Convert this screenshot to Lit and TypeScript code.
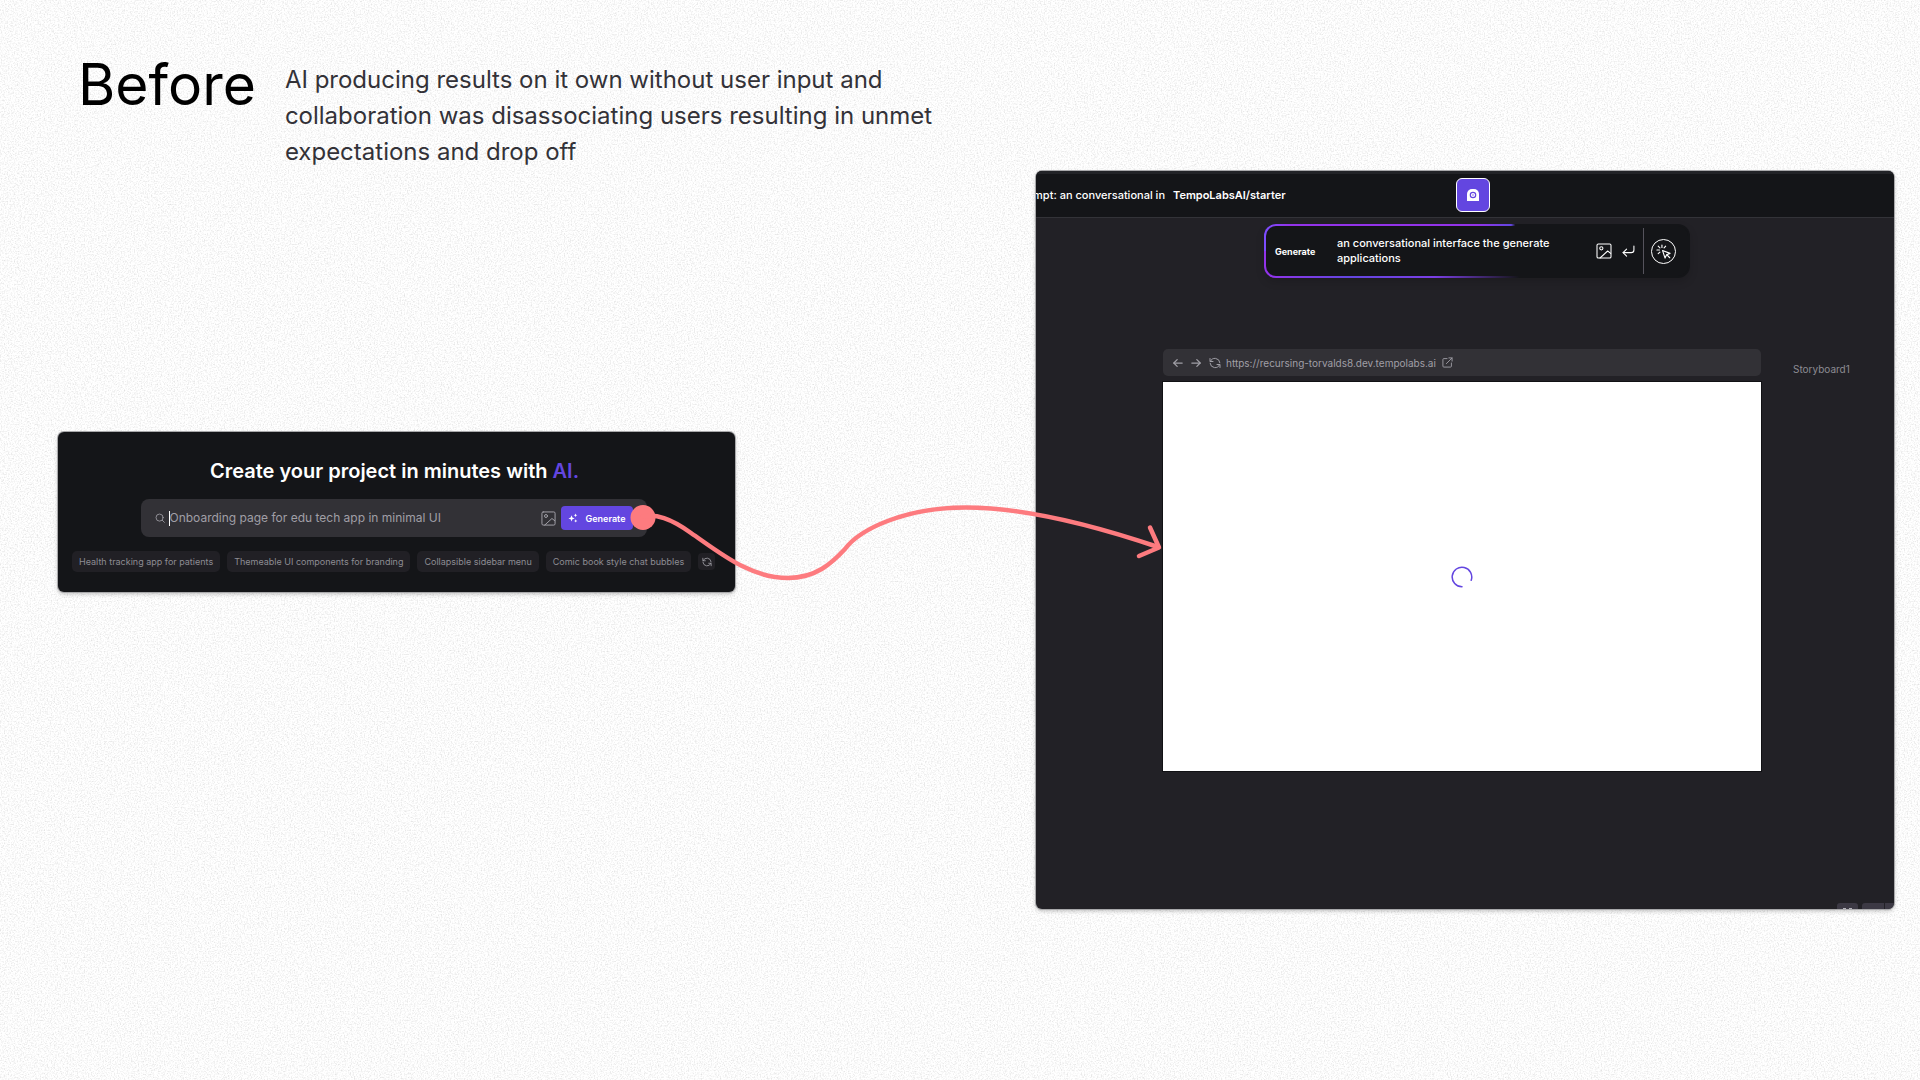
import { LitElement, html, css, svg } from "lit";
import { customElement } from "lit/decorators.js";

const base = css`
  *, *::before, *::after { box-sizing: border-box; }
  svg { display: block; flex: none; fill: none; stroke: currentColor; stroke-linecap: round; stroke-linejoin: round; }
  button, input, textarea { font: inherit; color: inherit; background: none; border: 0; padding: 0; margin: 0; outline: 0; }
  h1, h2, p, ul { margin: 0; padding: 0; }
  a { color: inherit; text-decoration: none; }
`;

const icon = (size: number, body: unknown, width = 2) =>
  html`<svg width=${size} height=${size} viewBox="0 0 24 24" stroke-width=${width} aria-hidden="true">${body}</svg>`;

const searchIcon = svg`<circle cx="11" cy="11" r="8.5"/><path d="M17.5 17.5 22.5 22.5"/>`;
const imageIcon = svg`<rect x="1.5" y="1.5" width="21" height="21" rx="2"/><circle cx="8" cy="8" r="2.4"/><path d="M22 15.5 17.5 12 6 22.5"/>`;
const refreshIcon = svg`<path d="M2 3v6h6"/><path d="M22 21v-6h-6"/><path d="M2.6 9A10 10 0 0 1 21.8 11.5"/><path d="M21.4 15A10 10 0 0 1 2.2 12.5"/>`;
const sparkleIcon = svg`<g fill="currentColor" stroke="none"><path d="M8.5 5.5 10.6 11 16 13l-5.4 2L8.5 20.5 6.4 15 1 13l5.4-2z"/><path d="M18 1l1.3 3.2L22.5 5.5l-3.2 1.3L18 10l-1.3-3.2L13.5 5.5l3.2-1.3z"/><path d="M18.5 15l1.2 2.8 2.8 1.2-2.8 1.2-1.2 2.8-1.2-2.8-2.8-1.2 2.8-1.2z"/></g>`;
const enterIcon = svg`<path d="M22 2v7a5 5 0 0 1-5 5H2"/><path d="M8.5 7.5 2 14l6.5 6.5"/>`;
const backIcon = svg`<path d="M22 12H2"/><path d="M10 4 2 12l8 8"/>`;
const forwardIcon = svg`<path d="M2 12h20"/><path d="M14 4l8 8-8 8"/>`;
const externalIcon = svg`<path d="M11 3.5H4a2 2 0 0 0-2 2V20a2 2 0 0 0 2 2h14.5a2 2 0 0 0 2-2v-7"/><path d="M15 2h7v7"/><path d="M22 2 9.5 14.5"/>`;
const clickIcon = svg`<path d="M10.500 10.500 22.500 15l-5.500 2.200L14.500 22.500z"/><path d="M17.500 17.500 22 22"/><path d="M9.500 1.500v4"/><path d="M1.500 9.500h4"/><path d="M3.500 3.500l2.800 2.800"/><path d="M15.500 3.500l-2.600 2.800"/><path d="M3.500 15.500l2.800-2.600"/>`;

@customElement("prompt-card")
export class PromptCard extends LitElement {
  static styles = [base, css`
    :host { display: flex; flex-direction: column; align-items: center; padding: 27px 14px 20px; border-radius: 6px; background: #141518; color: #fff; box-shadow: 0 0 0 1px #a9a9ab, 0 2px 4px rgba(0, 0, 0, .25); }
    .title { padding-right: 4px; font-size: 20px; line-height: 24px; font-weight: 600; }
    .accent { color: #6346e0; }
    .search { display: flex; align-items: center; width: 506px; max-width: 100%; height: 38px; margin-top: 16px; margin-right: 6px; padding: 0 14px 0 14px; border-radius: 8px; background: #323136; color: #a09fa6; }
    .caret { width: 1px; height: 15px; margin-left: 4px; background: #fff; }
    .field { flex: 1; min-width: 0; font-size: 12px; line-height: 16px; }
    .field::placeholder { color: #a09fa6; opacity: 1; }
    .generate { display: flex; align-items: center; gap: 8px; height: 24px; margin-left: 5px; padding: 0 7px 0 7px; border-radius: 4px; background: #6346e0; color: #fff; font-size: 9px; font-weight: 600; }
    .ideas { display: flex; align-items: center; gap: 7px; margin-top: 14px; width: 100%; list-style: none; white-space: nowrap; }
    .idea { display: block; height: 21px; padding: 0 7px; border-radius: 5px; background: #212025; color: #8d8c93; font-size: 9px; line-height: 21px; }
    .refresh { display: grid; place-items: center; width: 17px; height: 17px; border-radius: 4px; background: #212025; color: #a09fa6; }
  `];

  private ideas = [
    "Health tracking app for patients",
    "Themeable UI components for branding",
    "Collapsible sidebar menu",
    "Comic book style chat bubbles",
  ];

  render() {
    return html`
      <h2 class="title">Create your project in minutes with <span class="accent">AI.</span></h2>
      <div class="search">
        ${icon(10, searchIcon)}
        <span class="caret"></span>
        <input class="field" aria-label="Project description" placeholder="Onboarding page for edu tech app in minimal UI" />
        <button aria-label="Attach image">${icon(15, imageIcon, 1.6)}</button>
        <button class="generate">${icon(10, sparkleIcon)}Generate</button>
      </div>
      <ul class="ideas">
        ${this.ideas.map((idea) => html`<li><button class="idea">${idea}</button></li>`)}
        <li><button class="refresh" aria-label="More ideas">${icon(10, refreshIcon)}</button></li>
      </ul>
    `;
  }
}

@customElement("editor-card")
export class EditorCard extends LitElement {
  static styles = [base, css`
    :host { display: flex; flex-direction: column; border-radius: 6px; overflow: hidden; background: #222126; color: #fff; box-shadow: 0 0 0 1px #a9a9ab, 0 2px 4px rgba(0, 0, 0, .25); }
    .bar { display: grid; grid-template-columns: 1fr auto 1fr; align-items: center; height: 47px; padding: 0 0 1px 16px; border-top: 3px solid #222327; border-bottom: 1px solid #333338; background: #141518; }
    .crumbs { display: flex; gap: 8px; margin-left: -16px; font-size: 11px; line-height: 16px; font-weight: 600; white-space: nowrap; }
    .crumb { display: flex; justify-content: flex-end; width: 129px; overflow: hidden; font-weight: 500; }
    .logo { display: grid; place-items: center; width: 34px; height: 34px; border: 1px solid #fff; border-radius: 6px; background: #6346e0; }
    .canvas { display: flex; flex-direction: column; align-items: center; padding-top: 6px; }
    .prompt { width: 426px; max-width: 100%; margin-left: 24px; padding: 2px; border-radius: 12px; box-shadow: 0 4px 8px rgba(0, 0, 0, .15);
      background:
        linear-gradient(90deg, #7c4dff 0%, #9333ea 6%, #9333ea 50%, #6346e0 58%, #141518 59%) top / 100% 27px no-repeat,
        linear-gradient(90deg, #9333ea 0%, #6346e0 20%, #7b3fe6 40%, #141518 60%) bottom / 100% 27px no-repeat; }
    .inner { display: flex; align-items: center; height: 50px; padding: 0 12px 0 9px; border-radius: 10px; background: #141518; }
    .label { width: 62px; font-size: 9px; font-weight: 700; }
    .text { display: block; flex: 1; min-width: 0; height: 30px; resize: none; overflow: hidden; font-size: 11px; line-height: 15px; font-weight: 500; }
    .tools { display: flex; align-items: center; gap: 10px; margin: 0 8px 0 32px; }
    .pick { display: grid; place-items: center; width: 25px; height: 25px; border: 1px solid #fff; border-radius: 50%; }
    .rule { width: 1px; height: 46px; margin-right: 7px; background: #55535c; }
    .board { display: grid; grid-template-columns: 127px 1fr 133px; width: 100%; margin-top: 71px; }
    .browser { grid-column: 2; }
    .address { display: flex; align-items: center; gap: 8px; height: 27px; padding-left: 10px; border-radius: 5px; background: #323136; color: #a09fa6; font-size: 10px; }
    .url { display: flex; align-items: center; gap: 6px; margin-left: -3px; }
    .view { display: grid; place-items: center; margin-top: 6px; aspect-ratio: 598 / 389; background: #fff; color: #6346e0; box-shadow: 0 0 0 1px #111114; }
    .name { padding: 12px 0 0 32px; color: #8d8c93; font-size: 10px; line-height: 16px; }
    .foot { display: flex; justify-content: flex-end; gap: 4px; margin-top: 132px; height: 6px; }
    .zoom { display: flex; align-items: flex-end; justify-content: center; gap: 3px; width: 21px; border-radius: 3px 3px 0 0; background: #3c3944; }
    .dash { width: 3px; height: 1px; background: #b5b3bb; }
    .level { width: 22px; border-radius: 3px 0 0 0; background: #3c3944; }
    .more { width: 9px; margin-left: -3px; background: #3c3944; }
  `];

  render() {
    return html`
      <header class="bar">
        <div class="crumbs"><span class="crumb">mpt: an conversational in</span><span>TempoLabsAI/starter</span></div>
        <a class="logo" href="#home" aria-label="Home">
          <svg width="14" height="14" viewBox="0 0 14 14" aria-hidden="true">
            <path d="M1 13V6a5 5 0 0 1 5-5h2a5 5 0 0 1 5 5v7z" fill="#fff" stroke="none" />
            <circle cx="7" cy="7" r="2.7" stroke="#6346e0" stroke-width="1.2" />
            <circle cx="7" cy="7" r="0.7" fill="#6346e0" stroke="none" />
          </svg>
        </a>
      </header>
      <div class="canvas">
        <div class="prompt">
          <div class="inner">
            <label class="label" for="prompt">Generate</label>
            <textarea class="text" id="prompt" rows="2" .value=${"an conversational interface the generate applications"}></textarea>
            <div class="tools">
              <button aria-label="Attach image">${icon(16, imageIcon, 1.6)}</button>
              <button aria-label="Submit">${icon(13, enterIcon)}</button>
            </div>
            <span class="rule"></span>
            <button class="pick" aria-label="Pick element">${icon(15, clickIcon, 1.8)}</button>
          </div>
        </div>
        <div class="board">
          <div class="browser">
            <div class="address">
              <button aria-label="Back">${icon(10, backIcon, 3)}</button>
              <button aria-label="Forward">${icon(10, forwardIcon, 3)}</button>
              <button aria-label="Reload">${icon(12, refreshIcon)}</button>
              <a class="url" href="https://recursing-torvalds8.dev.tempolabs.ai">https://recursing-torvalds8.dev.tempolabs.ai ${icon(11, externalIcon)}</a>
            </div>
            <div class="view" role="status" aria-label="Loading">
              <svg width="22" height="22" viewBox="0 0 22 22" stroke-width="1.5" aria-hidden="true"><path d="M11 20.8A9.8 9.8 0 1 1 20.2 14.3" /></svg>
            </div>
          </div>
          <p class="name">Storyboard1</p>
        </div>
      </div>
      <div class="foot">
        <span class="zoom"><i class="dash"></i><i class="dash"></i></span>
        <span class="level"></span><span class="more"></span>
      </div>
    `;
  }
}

@customElement("app-root")
export class AppRoot extends LitElement {
  static styles = [base, css`
    :host { display: block; font-family: Inter, "Liberation Sans", sans-serif; }
    .page { position: relative; min-height: 100vh; overflow: hidden; background: #fff; }
    .grain { position: absolute; inset: 0; width: 100%; height: 100%; }
    .intro { position: relative; display: flex; gap: 29px; height: 171px; padding: 47px 40px 0 78px; }
    .heading { color: #000; font-size: 57px; line-height: 76px; font-weight: 400; }
    .summary { max-width: 660px; padding-top: 15px; color: #333238; font-size: 24px; line-height: 36px; }
    .flow { position: relative; display: grid; grid-template-columns: 677fr 858fr; column-gap: 301px; align-items: start; padding: 0 26px 60px 58px; }
    .flow prompt-card { margin-top: 261px; }
    .link { position: absolute; left: 620px; top: 309px; stroke: #fd7b7f; }
  `];

  render() {
    return html`
      <main class="page">
        <svg class="grain" aria-hidden="true">
          <filter id="grain" x="0" y="0" width="100%" height="100%" color-interpolation-filters="sRGB">
            <feTurbulence type="fractalNoise" baseFrequency="0.7" numOctaves="2" seed="4" />
            <feColorMatrix values="0 0 0 0 0.5  0 0 0 0 0.5  0 0 0 0 0.5  0.5 0 0 0 -0.22" />
          </filter>
          <rect width="100%" height="100%" stroke="none" filter="url(#grain)" />
        </svg>
        <header class="intro">
          <h1 class="heading">Before</h1>
          <p class="summary">AI producing results on it own without user input and collaboration was disassociating users resulting in unmet expectations and drop off</p>
        </header>
        <section class="flow">
          <prompt-card></prompt-card>
          <editor-card></editor-card>
          <svg class="link" width="560" height="120" viewBox="0 0 560 120" stroke-width="4.5" aria-hidden="true">
            <circle cx="23" cy="37.5" r="12.5" fill="#fd7b7f" stroke="none" />
            <path d="M23 36.5C36 34 50 38 71 53C100 73 130 98 168 98C196 98 212 83 225 69C240 49 285 27.5 346 27.5C400 27.5 470 44 538 67" />
            <path d="M530 47.5 539 67.5 519 76" />
          </svg>
        </section>
      </main>
    `;
  }
}
